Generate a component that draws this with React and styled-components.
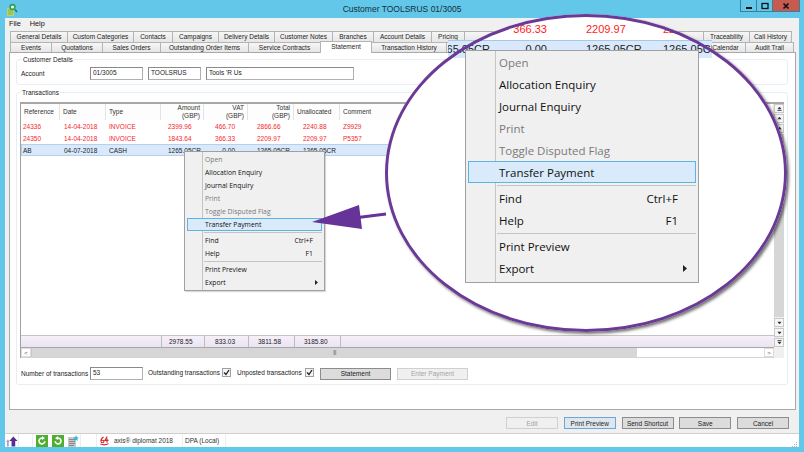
import React from 'react'
import styled, { createGlobalStyle } from 'styled-components'

const GlobalStyle = createGlobalStyle`
html, body {
  margin: 0;
  width: 804px;
  height: 452px;
  overflow: hidden;
  background: #63c7ea;
}
* {
  box-sizing: border-box;
}
`

const UI_FONT = `"Liberation Sans", Arial, sans-serif`
const MENU_FONT = `"Open Sans", "Noto Sans", sans-serif`
const COLUMNS = '39px 46px 55px 43px 44px 46px 46px 1fr'
const LENS_COLUMNS = '42px 96px 77px 49px'

const Page = styled.div`
position: relative;
width: 804px;
height: 452px;
display: flex;
flex-direction: column;
font-family: ${UI_FONT};
font-size: 6.5px;
color: #222;
`

const TitleBar = styled.div`
height: 18px;
flex: none;
display: grid;
grid-template-columns: 1fr auto 1fr;
align-items: start;
`

const TitleIcon = styled.svg`
width: 12px;
height: 13px;
margin: 3px 0 0 6px;
`

const TitleText = styled.div`
font-size: 8.5px;
line-height: 18px;
color: #12303c;
`

const WindowButtons = styled.div`
display: flex;
justify-content: flex-end;
margin-right: 4px;
`

const WindowButton = styled.div`
width: ${(props) => props.$width}px;
height: 12px;
display: flex;
align-items: center;
justify-content: center;
background: ${(props) => props.$bg || '#63c7ea'};
border: 1px solid #3a7f98;
border-top: none;
margin-left: -1px;
`

const Client = styled.div`
flex: none;
width: 794px;
height: 429px;
margin-left: 5px;
background: #f0f0f0;
display: flex;
flex-direction: column;
`

const MenuBar = styled.div`
height: 13px;
flex: none;
display: flex;
gap: 9px;
padding-left: 4px;
font-size: 7.3px;
line-height: 12px;
color: #111;
`

const TabRow = styled.div`
display: flex;
height: ${(props) => props.$height}px;
flex: none;
margin-left: 5px;
`

const Tab = styled.div`
width: ${(props) => props.$width}px;
flex: none;
border: 1px solid #b4b4b4;
border-bottom: none;
margin-right: -1px;
background: linear-gradient(#f6f6f6, #e6e6e6);
text-align: center;
line-height: 10px;
white-space: nowrap;
overflow: hidden;
`

const ActiveTab = styled(Tab)`
height: 12px;
margin-top: -1px;
background: #fff;
position: relative;
z-index: 1;
`

const Panel = styled.div`
width: 787px;
height: 358px;
flex: none;
margin-left: 4px;
background: #fff;
border: 1px solid #a8a8a8;
padding: 6px 7px 0 6px;
display: flex;
flex-direction: column;
`

const Group = styled.div`
border: 1px solid #e6eef4;
border-radius: 3px;
`

const CustomerGroup = styled(Group)`
height: 26px;
flex: none;
padding: 0 4px;
margin-bottom: 7px;
`

const TransactionsGroup = styled(Group)`
height: 293px;
flex: none;
padding: 0 3px 0 3px;
`

const GroupTitle = styled.div`
width: fit-content;
height: 10px;
margin: -5px 0 0 1px;
padding: 0 1px;
background: #fff;
line-height: 10px;
`

const AccountRow = styled.div`
display: flex;
align-items: center;
height: 13px;
margin-top: 2px;
`

const AccountLabel = styled.div`
width: 69px;
`

const Field = styled.div`
width: ${(props) => props.$width}px;
height: 13px;
flex: none;
margin-right: 5px;
padding-left: 2px;
border: 1px solid #b0b0b0;
border-top-color: #8a8a8a;
border-left-color: #8a8a8a;
background: #fff;
line-height: 10px;
`

const GridBox = styled.div`
width: 764px;
height: 256px;
margin-top: 4px;
display: flex;
border-top: 2px solid #a8a8a8;
border-left: 1px solid #a0a0a0;
`

const GridMain = styled.div`
flex: 1;
display: flex;
flex-direction: column;
min-width: 0;
`

const HeaderRow = styled.div`
height: 16px;
flex: none;
display: grid;
grid-template-columns: ${COLUMNS};
background: #fdfdfd;
`

const HeaderCell = styled.div`
display: flex;
flex-direction: column;
justify-content: center;
align-items: ${(props) => (props.$right ? 'flex-end' : 'flex-start')};
padding: 0 3px;
border-right: 1px solid #e4e4e4;
line-height: 8px;
color: #333;
`

const DataRow = styled.div`
height: 12px;
flex: none;
display: grid;
grid-template-columns: ${COLUMNS};
align-items: center;
color: ${(props) => (props.$selected ? '#222' : '#f5262b')};
background: ${(props) => (props.$selected ? '#d9e9fb' : 'transparent')};
box-shadow: ${(props) => (props.$selected ? 'inset 0 0 0 1px #b4d0ec' : 'none')};
`

const Cell = styled.div`
padding-left: ${(props) => props.$inset}px;
white-space: nowrap;
`

const VatCell = styled.div`
text-align: right;
padding-right: 13px;
`

const GridSpace = styled.div`
flex: 1;
`

const TotalsRow = styled.div`
height: 13px;
flex: none;
display: grid;
grid-template-columns: ${COLUMNS};
align-items: stretch;
line-height: 11px;
background: linear-gradient(#f5f0f9, #ebe3f3);
border-top: 1px solid #c4c4c4;
border-bottom: 1px solid #a8a8a8;
`

const TotalCell = styled(Cell)`
border-left: 1px solid #bdbdbd;
`

const TotalVat = styled(VatCell)`
border-left: 1px solid #bdbdbd;
`

const TotalEnd = styled.div`
border-left: 1px solid #bdbdbd;
`

const HScroll = styled.div`
height: 10px;
flex: none;
display: flex;
border-bottom: 1px solid #d4d4d4;
`

const ScrollEnd = styled.div`
width: 10px;
flex: none;
display: flex;
align-items: center;
justify-content: center;
background: #fff;
border: 1px solid #dcdcdc;
font-size: 6px;
color: #555;
`

const HThumb = styled.div`
width: 606px;
flex: none;
display: flex;
align-items: center;
justify-content: center;
background: #d6d6d6;
border-left: 1px solid #c8c8c8;
font-size: 5px;
line-height: 5px;
letter-spacing: -0.5px;
color: #555;
`

const HTrack = styled.div`
flex: 1;
background: #fff;
`

const VScroll = styled.div`
width: 10px;
flex: none;
display: flex;
flex-direction: column;
background: #f0f0f0;
`

const VButton = styled.div`
width: 10px;
height: 9px;
flex: none;
margin-bottom: 1px;
display: flex;
align-items: center;
justify-content: center;
background: #f6f6f6;
border: 1px solid #c8c8c8;
`

const VThumb = styled.div`
flex: 1;
background: #d6d6d6;
margin-bottom: 1px;
`

const VCorner = styled.div`
height: 10px;
flex: none;
background: #f0f0f0;
`

const ControlsRow = styled.div`
height: 13px;
margin: 9px 0 0 1px;
display: flex;
align-items: center;
`

const ControlLabel = styled.div`
width: ${(props) => props.$width}px;
flex: none;
margin-left: ${(props) => props.$left || 0}px;
margin-bottom: ${(props) => (props.$raised ? 3 : 0)}px;
white-space: nowrap;
`

const CountField = styled(Field)`
margin: 0 0 0 4px;
`

const Check = styled.div`
width: 9px;
height: 9px;
flex: none;
margin: 0 0 3px 4px;
display: flex;
align-items: center;
justify-content: center;
background: #f4f4f4;
border: 1px solid #a0a0a0;
`

const Button = styled.div`
width: ${(props) => props.$width || 52}px;
height: ${(props) => props.$height || 12}px;
flex: none;
margin-left: ${(props) => props.$left || 0}px;
display: flex;
align-items: center;
justify-content: center;
background: ${(props) => (props.$disabled ? '#f0f0f0' : props.$focus ? '#dfe6ee' : '#dcdcdc')};
border: 1px solid ${(props) => (props.$disabled ? '#d0d0d0' : props.$focus ? '#6aa6d8' : '#8c8c8c')};
color: ${(props) => (props.$disabled ? '#a4a4a4' : '#222')};
`

const ButtonBar = styled.div`
height: 24px;
flex: none;
padding: 7px 10px 0 0;
display: flex;
justify-content: flex-end;
gap: 5.75px;
border-bottom: 1px solid #cfcfcf;
`

const StatusBar = styled.div`
height: 13px;
flex: none;
display: flex;
align-items: center;
background: #fff;
`

const StatusCell = styled.div`
width: ${(props) => props.$width}px;
height: 13px;
flex: none;
display: flex;
align-items: center;
gap: ${(props) => props.$gap || 0}px;
padding-left: ${(props) => props.$inset || 0}px;
border-right: 1px solid #ededed;
color: #333;
white-space: nowrap;
`

const ResizeGrip = styled.svg`
width: 6px;
height: 6px;
margin: auto 1px 0 auto;
`

const LensWrap = styled.div`
position: absolute;
left: 0;
top: 0;
width: 804px;
height: 452px;
pointer-events: none;
font-size: 11px;
`

const LensFill = styled.div`
position: absolute;
left: 385px;
top: 14px;
width: 402px;
height: 318px;
border-radius: 50%;
background: #fff;
overflow: hidden;
box-shadow: 2px 2px 3px rgba(0, 0, 0, 0.55);
`

const LensRing = styled.div`
position: absolute;
left: 385px;
top: 14px;
width: 402px;
height: 318px;
border: 3px solid #6a3a96;
border-radius: 50%;
`

const LensFigures = styled.div`
margin-left: 63px;
padding-top: 9px;
display: grid;
grid-template-columns: ${LENS_COLUMNS};
line-height: 12px;
white-space: nowrap;
color: #ff1a1a;
`

const LensSelected = styled.div`
position: absolute;
left: 448px;
top: 40px;
width: 264px;
height: 18px;
padding-top: 2px;
display: grid;
grid-template-columns: ${LENS_COLUMNS};
line-height: 12px;
white-space: nowrap;
overflow: hidden;
background: #d9e9fb;
border-top: 1px solid #a8c8e8;
`

const LensRight = styled.div`
display: flex;
justify-content: flex-end;
overflow: hidden;
`

const LensMiddle = styled(LensRight)`
padding-right: 39px;
`

const ContextMenu = styled.div`
position: absolute;
left: ${(props) => props.$left}px;
top: ${(props) => props.$top}px;
width: ${(props) => props.$width}px;
height: ${(props) => props.$height}px;
padding: ${(props) => (props.$big ? 0 : 1)}px 2px;
border: 1px solid #a0a0a0;
background: linear-gradient(90deg, #f0f0f0 ${(props) => props.$gutter}px, #c4c4c4 ${(props) => props.$gutter}px, #c4c4c4 ${(props) => props.$gutter + 1}px, #f0f0f0 ${(props) => props.$gutter + 1}px);
font-family: ${MENU_FONT};
font-size: ${(props) => (props.$big ? 11.5 : 6.8)}px;
box-shadow: ${(props) => (props.$big ? 'none' : '1px 1px 1px rgba(0, 0, 0, 0.15)')};
`

const MenuItem = styled.div`
height: ${(props) => (props.$big ? 22 : 13)}px;
display: flex;
align-items: center;
justify-content: space-between;
padding-left: ${(props) => (props.$big ? 31 : 18)}px;
padding-right: ${(props) => (props.$big ? 18 : 9)}px;
color: ${(props) => (props.$disabled ? '#7a7a7a' : '#111')};
background: ${(props) => (props.$active ? '#d9eafb' : 'transparent')};
outline: ${(props) => (props.$active ? '1px solid #5fb2e2' : 'none')};
outline-offset: -1px;
`

const MenuSeparator = styled.div`
height: ${(props) => (props.$big ? 4 : 3)}px;
display: flex;
align-items: center;
padding-left: ${(props) => (props.$big ? 29 : 17)}px;

&::after {
  content: '';
  flex: 1;
  height: 1px;
  background: #c4c4c4;
}
`

const SubArrow = styled.svg`
width: ${(props) => (props.$big ? 4 : 3)}px;
height: ${(props) => (props.$big ? 7 : 5)}px;
margin-right: ${(props) => (props.$big ? -9 : -5)}px;
`

const PointerArrow = styled.svg`
position: absolute;
left: 310px;
top: 200px;
width: 80px;
height: 34px;
`

const ROW1_TABS = [
  ['General Details', 58], ['Custom Categories', 67], ['Contacts', 40], ['Campaigns', 47],
  ['Delivery Details', 57], ['Customer Notes', 59], ['Branches', 42], ['Account Details', 59],
  ['Pricing', 34], ['ePayments', 120], ['Documents', 121], ['Traceability', 47], ['Call History', 43],
]

const ROW2_BEFORE = [
  ['Events', 42], ['Quotations', 52], ['Sales Orders', 59], ['Outstanding Order Items', 89], ['Service Contracts', 73],
]

const ROW2_AFTER = [
  ['Transaction History', 76], ['Analysis', 130], ['Activities', 131], ['Calendar', 41], ['Audit Trail', 49],
]

const HEADERS = [
  ['Reference'], ['Date'], ['Type'], ['Amount', '(GBP)'], ['VAT', '(GBP)'], ['Total', '(GBP)'], ['Unallocated'], ['Comment'],
]

const ROWS = [
  { ref: '24336', date: '14-04-2018', type: 'INVOICE', amount: '2399.96', vat: '466.70', total: '2866.66', open: '2240.88', note: 'Z9929' },
  { ref: '24350', date: '14-04-2018', type: 'INVOICE', amount: '1843.64', vat: '366.33', total: '2209.97', open: '2209.97', note: 'P5357' },
  { ref: 'AB', date: '04-07-2018', type: 'CASH', amount: '1265.05CR', vat: '0.00', total: '1265.05CR', open: '1265.05CR', note: '', selected: true },
]

const MENU = [
  { label: 'Open', disabled: true },
  { label: 'Allocation Enquiry' },
  { label: 'Journal Enquiry' },
  { label: 'Print', disabled: true },
  { label: 'Toggle Disputed Flag', disabled: true },
  { label: 'Transfer Payment', active: true },
  { separator: true },
  { label: 'Find', hint: 'Ctrl+F' },
  { label: 'Help', hint: 'F1' },
  { separator: true },
  { label: 'Print Preview' },
  { label: 'Export', more: true },
]

const Menu = ({ big, ...rest }) => (
  <ContextMenu $big={big} {...rest}>
    {MENU.map((item, i) =>
      item.separator ? (
        <MenuSeparator key={i} $big={big} />
      ) : (
        <MenuItem key={i} $big={big} $disabled={item.disabled} $active={item.active}>
          <span>{item.label}</span>
          {item.hint && <span>{item.hint}</span>}
          {item.more && (
            <SubArrow $big={big} viewBox="0 0 4 6" preserveAspectRatio="none">
              <path d="M0 0L4 3L0 6Z" fill="#222" />
            </SubArrow>
          )}
        </MenuItem>
      )
    )}
  </ContextMenu>
)

const CheckMark = () => (
  <svg width="7" height="7" viewBox="0 0 7 7">
    <path d="M1 3.5L3 5.5L6 1" fill="none" stroke="#222" strokeWidth="1.3" />
  </svg>
)

const ScrollGlyph = ({ flip, bars }) => (
  <svg width="5" height="5" viewBox="0 0 6 6" style={flip ? { transform: 'rotate(180deg)' } : undefined}>
    <path d="M3 1L5.5 4H0.5Z" fill="#333" />
    {bars && <path d="M0.5 5.5H5.5" stroke="#333" strokeWidth="1" />}
  </svg>
)

const RefreshIcon = ({ flip }) => (
  <svg width="12" height="12" viewBox="0 0 12 12">
    <rect width="12" height="12" fill="#4fae32" />
    <g style={flip ? { transform: 'scaleX(-1)', transformOrigin: '6px 6px' } : undefined}>
      <path d="M8.8 6.2A2.9 2.9 0 1 1 6.6 3.2" fill="none" stroke="#fff" strokeWidth="1.6" />
      <path d="M6 1L9 3.2L6 5Z" fill="#fff" />
    </g>
  </svg>
)

export default function App() {
  return (
    <Page>
      <GlobalStyle />
      <TitleBar>
        <TitleIcon viewBox="0 0 12 13">
          <rect x="1" y="5" width="7" height="8" fill="#b4d66a" />
          <path d="M2 7H7M2 9H7M2 11H7" stroke="#7fa83e" strokeWidth="0.8" />
          <circle cx="6.5" cy="4" r="3.2" fill="#2c9e58" />
          <circle cx="6.5" cy="4" r="1.6" fill="#eef8ee" />
          <path d="M9 6.5L11 9" stroke="#1f8045" strokeWidth="1.6" />
        </TitleIcon>
        <TitleText>Customer TOOLSRUS 01/3005</TitleText>
        <WindowButtons>
          <WindowButton $width={17}>
            <svg width="8" height="8" viewBox="0 0 8 8"><rect x="1" y="5" width="6" height="2" fill="#111" /></svg>
          </WindowButton>
          <WindowButton $width={17}>
            <svg width="8" height="8" viewBox="0 0 8 8"><rect x="1" y="1.5" width="6" height="5" fill="none" stroke="#111" strokeWidth="1.3" /></svg>
          </WindowButton>
          <WindowButton $width={28} $bg="#c75b50">
            <svg width="8" height="8" viewBox="0 0 8 8"><path d="M1.5 1.5L6.5 6.5M6.5 1.5L1.5 6.5" stroke="#111" strokeWidth="1.7" /></svg>
          </WindowButton>
        </WindowButtons>
      </TitleBar>

      <Client>
        <MenuBar>
          <span>File</span>
          <span>Help</span>
        </MenuBar>
        <TabRow $height={11}>
          {ROW1_TABS.map(([label, width]) => (
            <Tab key={label} $width={width}>{label}</Tab>
          ))}
        </TabRow>
        <TabRow $height={10}>
          {ROW2_BEFORE.map(([label, width]) => (
            <Tab key={label} $width={width}>{label}</Tab>
          ))}
          <ActiveTab $width={52}>Statement</ActiveTab>
          {ROW2_AFTER.map(([label, width]) => (
            <Tab key={label} $width={width}>{label}</Tab>
          ))}
        </TabRow>

        <Panel>
          <CustomerGroup>
            <GroupTitle>Customer Details</GroupTitle>
            <AccountRow>
              <AccountLabel>Account</AccountLabel>
              <Field $width={53}>01/3005</Field>
              <Field $width={53}>TOOLSRUS</Field>
              <Field $width={148}>Tools 'R Us</Field>
            </AccountRow>
          </CustomerGroup>

          <TransactionsGroup>
            <GroupTitle>Transactions</GroupTitle>
            <GridBox>
              <GridMain>
                <HeaderRow>
                  {HEADERS.map((lines, i) => (
                    <HeaderCell key={i} $right={lines.length > 1}>
                      {lines.map((line) => (
                        <span key={line}>{line}</span>
                      ))}
                    </HeaderCell>
                  ))}
                </HeaderRow>
                {ROWS.map((row) => (
                  <DataRow key={row.ref} $selected={row.selected}>
                    <Cell $inset={2}>{row.ref}</Cell>
                    <Cell $inset={4}>{row.date}</Cell>
                    <Cell $inset={3}>{row.type}</Cell>
                    <Cell $inset={7}>{row.amount}</Cell>
                    <VatCell>{row.vat}</VatCell>
                    <Cell $inset={9}>{row.total}</Cell>
                    <Cell $inset={9}>{row.open}</Cell>
                    <Cell $inset={3}>{row.note}</Cell>
                  </DataRow>
                ))}
                <GridSpace />
                <TotalsRow>
                  <span />
                  <span />
                  <span />
                  <TotalCell $inset={7}>2978.55</TotalCell>
                  <TotalVat>833.03</TotalVat>
                  <TotalCell $inset={9}>3811.58</TotalCell>
                  <TotalCell $inset={9}>3185.80</TotalCell>
                  <TotalEnd />
                </TotalsRow>
                <HScroll>
                  <ScrollEnd>&lt;</ScrollEnd>
                  <HThumb>|||</HThumb>
                  <HTrack />
                  <ScrollEnd>&gt;</ScrollEnd>
                </HScroll>
              </GridMain>
              <VScroll>
                <VButton><ScrollGlyph bars /></VButton>
                <VButton><ScrollGlyph /></VButton>
                <VButton><ScrollGlyph /></VButton>
                <VThumb />
                <VButton><ScrollGlyph flip /></VButton>
                <VButton><ScrollGlyph flip /></VButton>
                <VButton><ScrollGlyph flip bars /></VButton>
                <VCorner />
              </VScroll>
            </GridBox>
            <ControlsRow>
              <ControlLabel $width={65}>Number of transactions</ControlLabel>
              <CountField $width={53}>53</CountField>
              <ControlLabel $width={70} $left={5} $raised>Outstanding transactions</ControlLabel>
              <Check><CheckMark /></Check>
              <ControlLabel $width={64} $left={6} $raised>Unposted transactions</ControlLabel>
              <Check><CheckMark /></Check>
              <Button $width={71} $height={12} $left={6}>Statement</Button>
              <Button $width={71} $height={12} $left={6} $disabled>Enter Payment</Button>
            </ControlsRow>
          </TransactionsGroup>
        </Panel>

        <ButtonBar>
          <Button $disabled>Edit</Button>
          <Button $focus>Print Preview</Button>
          <Button>Send Shortcut</Button>
          <Button>Save</Button>
          <Button>Cancel</Button>
        </ButtonBar>

        <StatusBar>
          <StatusCell $width={14} $inset={1}>
            <svg width="13" height="12" viewBox="0 0 13 12">
              <path d="M1 12V7H0L2 4L4 7H3V12Z" fill="#b79ad6" />
              <path d="M6 12V6H3.5L8 1L12.5 6H10V12Z" fill="#5a2d91" />
            </svg>
          </StatusCell>
          <StatusCell $width={14} />
          <StatusCell $width={48} $inset={3} $gap={4}>
            <RefreshIcon />
            <RefreshIcon flip />
            <svg width="11" height="12" viewBox="0 0 11 12">
              <rect x="0" y="2" width="8" height="10" fill="#c8c8c8" />
              <path d="M1 4.5H7M1 6.5H7M1 8.5H7M1 10.5H6" stroke="#777" strokeWidth="0.8" />
              <path d="M8 0L8.8 2.2L11 2.4L9.3 3.8L9.9 6L8 4.8L6.1 6L6.7 3.8L5 2.4L7.2 2.2Z" fill="#29b6e6" />
            </svg>
          </StatusCell>
          <StatusCell $width={16} />
          <StatusCell $width={86} $inset={3} $gap={5}>
            <svg width="9" height="11" viewBox="0 0 10 11">
              <path d="M4 1.5C2 2.5 1 4 1 6C1 7.5 2.2 8 3 8C4 8 4.6 7 4.2 6C3.8 5.2 2.6 5 1.4 5.6M8 1L5.4 5.4H9.4M7.8 3.4V8M0.5 9.5C3 10.5 7 10.5 9.5 9" fill="none" stroke="#d8232a" strokeWidth="1.2" />
            </svg>
            <span>axis® diplomat 2018</span>
          </StatusCell>
          <StatusCell $width={43} $inset={2}>DPA (Local)</StatusCell>
          <ResizeGrip viewBox="0 0 6 6">
            <path d="M4 1H5V2H4ZM2 3H3V4H2ZM4 3H5V4H4ZM0 5H1V6H0ZM2 5H3V6H2ZM4 5H5V6H4Z" fill="#b8b8b8" />
          </ResizeGrip>
        </StatusBar>
      </Client>

      <LensWrap>
        <Menu $left={184} $top={151} $width={141} $height={140} $gutter={17} />
        <PointerArrow viewBox="0 0 80 34">
          <path d="M2 22L49 5L52 29Z" fill="#663399" />
          <path d="M48 17.5L76 14" stroke="#663399" strokeWidth="3.2" />
        </PointerArrow>
        <LensFill>
          <LensFigures>
            <LensRight />
            <LensMiddle>366.33</LensMiddle>
            <span>2209.97</span>
            <span>2209.97</span>
          </LensFigures>
        </LensFill>
        <LensSelected>
          <LensRight>1265.05CR</LensRight>
          <LensMiddle>0.00</LensMiddle>
          <span>1265.05CR</span>
          <span>1265.05CR</span>
        </LensSelected>
        <LensRing />
        <Menu big $left={465} $top={50} $width={234} $height={233} $gutter={29} />
      </LensWrap>
    </Page>
  )
}
